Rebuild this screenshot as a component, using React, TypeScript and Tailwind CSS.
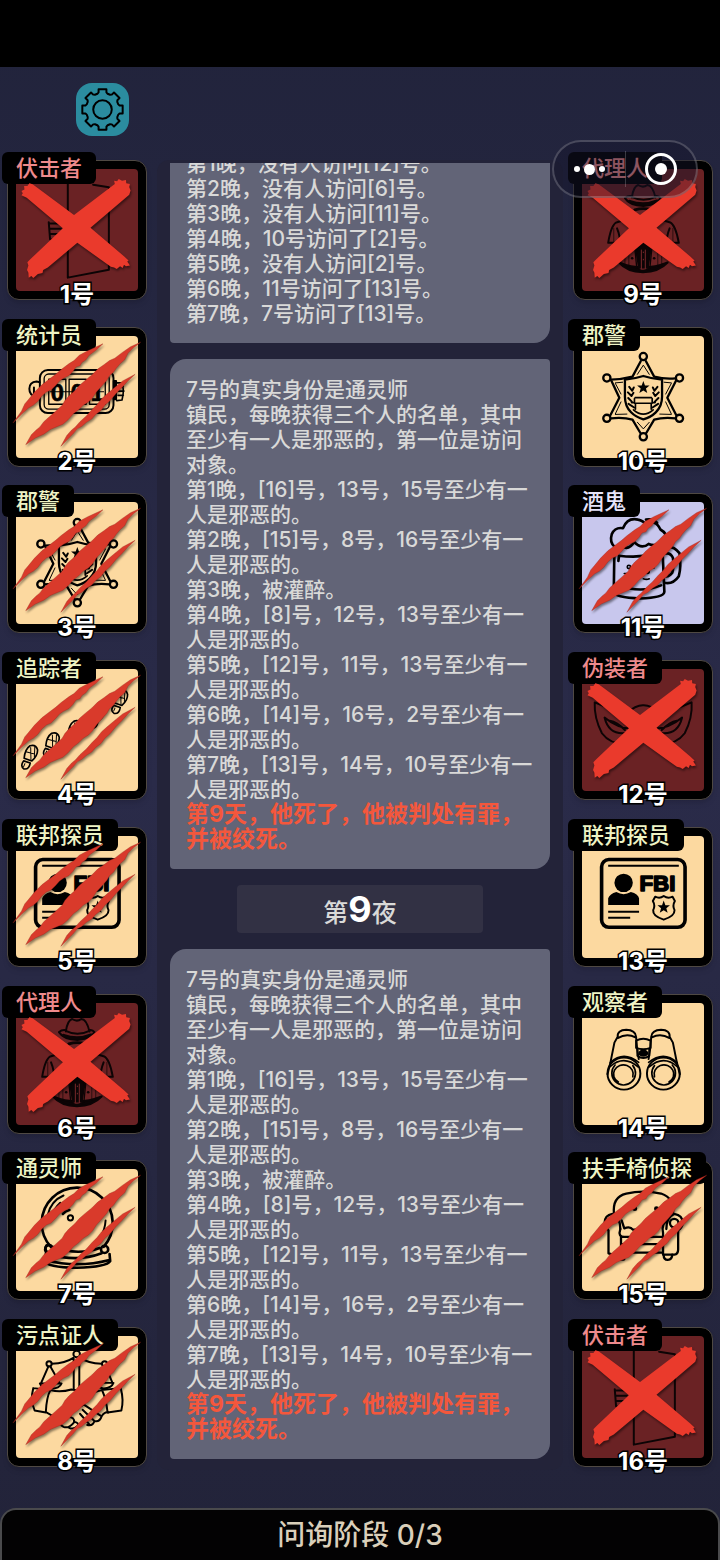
import type { ReactNode } from 'react'

type Mark = 'slash' | 'cross' | null
type Team = 'town' | 'neutral' | 'evil'
type RoleKey =
  | 'ambusher' | 'counter' | 'sheriff' | 'tracker' | 'fbi' | 'agent'
  | 'psychic' | 'witness' | 'drunk' | 'disguiser' | 'observer' | 'armchair'

interface Player {
  seat: number
  role: RoleKey
  mark: Mark
}

interface Role {
  name: string
  team: Team
  origin: string
  art: ReactNode
}

const STAR = 'M0-20 5-6 19-6 8 3 12 17 0 9-12 17-8 3-19-6-5-6Z'

const SheriffArt = (
  <g fill="none" stroke="#000" strokeWidth="7" strokeLinejoin="round" strokeLinecap="round">
    <path d="M422 692 397 739Q362 748 331 748L357 803 330 856M331 866 Q370 862 397 870L422 912M438 912 463 870Q490 862 528 866M530 856 503 803 529 752M528 744Q495 747 463 739L438 692" />
    {[[430, 678], [540, 743], [540, 866], [430, 922], [319, 866], [319, 743]].map(([cx, cy]) => (
      <circle key={`${cx}${cy}`} cx={cx} cy={cy} r="11" />
    ))}
    <path strokeWidth="3" d="M412 732 430 704 448 732M345 758 367 756M345 760 362 792M515 758 493 756M515 760 498 792M345 852 362 816M345 854 380 853M515 852 498 816M515 854 480 853M412 878 430 898 448 878" />
    <path d="M374 748Q402 746 430 737 458 746 487 748V800C487 842 455 862 430 869 405 862 374 842 374 800Z" />
    <path d={STAR} transform="translate(430 772)" fill="#000" stroke="none" />
    <path strokeWidth="5" d="M405 803H455M394 818H403V806M466 818H457V806M403 820H457M406 821V838M454 821V838M400 840Q430 866 460 840" />
    <path strokeWidth="6" d="M387 770 396 782M401 772 396 782M383 787 394 798M400 788 394 798M384 804 395 815M385 822 402 833M473 770 464 782M459 772 464 782M477 787 466 798M460 788 466 798M476 804 465 815M475 822 458 833" />
  </g>
)

const AgentArt = (
  <g fill="none" stroke="#0c0405" strokeWidth="6" strokeLinecap="round" strokeLinejoin="round">
    <path d="M197 152Q202 118 216 114 231 124 244 114 260 114 269 152" />
    <path d="M197 150Q232 168 269 150M176 154Q185 146 196 148M176 154Q190 176 232 178 275 174 284 154 278 146 269 148" />
    <path strokeWidth="10" d="M190 164Q232 180 274 163" />
    <path strokeWidth="9" d="M206 190Q232 182 258 190" />
    <path d="M125 290Q134 236 150 228L195 214M340 290Q330 236 314 228L270 214M125 290H150M340 290H315M152 246Q162 270 162 300M312 246Q302 270 302 300" />
    <path fill="#0c0405" d="M208 300 220 372Q231 378 244 372L256 300 232 280ZM158 350Q230 380 306 350 280 378 231 380 182 378 158 350Z" />
    <path stroke="#7a2a2c" strokeWidth="3" d="M226 312V368M238 312V368M232 318V320M232 340V342" />
    <path strokeWidth="2" d="M176 316V354M188 306V360M276 306V360M288 316V354M142 246V286M322 246V286" />
    <path strokeWidth="4" d="M206 306 212 366M258 306 252 366" />
    <circle cx="198" cy="337" r="4" fill="#0c0405" stroke="none" />
    <circle cx="265" cy="337" r="4" fill="#0c0405" stroke="none" />
  </g>
)

const FbiArt = (
  <g fill="none" stroke="#000" strokeLinecap="round" strokeLinejoin="round">
    <rect x="303" y="132" width="254" height="206" rx="22" strokeWidth="11" />
    <path strokeWidth="6" strokeLinecap="butt" d="M323 151H538M323 291H417M323 309H390" />
    <circle cx="370" cy="203" r="28" fill="#000" stroke="none" />
    <path fill="#000" stroke="none" d="M323 270V250Q328 236 348 231 370 244 392 231 414 236 417 250V270Z" />
    <text x="473" y="227" textAnchor="middle" fill="#000" strokeWidth="5" className="font-['Liberation_Sans_Narrow','Liberation_Sans',sans-serif] text-[68px] font-bold">FBI</text>
    <path strokeWidth="6" d="M466 245Q480 252 492 243 505 252 519 245L526 258Q518 272 525 286 526 304 492 315 458 304 460 286 467 272 459 258Z" />
    <path d={STAR} transform="translate(492 277)" fill="#000" stroke="none" />
  </g>
)

const DoorArt = (
  <g fill="none" stroke="#0c0405" strokeWidth="6" strokeLinecap="round" strokeLinejoin="round">
    <path d="M203 370V655L328 631V380L280 372M145 486 149 538M149 490H178M150 506H182M152 522H184M150 538 176 544" />
  </g>
)

const CounterArt = (
  <g fill="none" stroke="#000" strokeWidth="6" strokeLinejoin="round" strokeLinecap="round">
    <rect x="118" y="179" width="224" height="131" rx="24" />
    <rect x="131" y="191" width="198" height="107" rx="14" strokeWidth="4" />
    <rect x="145" y="207" width="52" height="76" strokeWidth="4" />
    <rect x="207" y="207" width="52" height="76" strokeWidth="4" />
    <rect x="269" y="207" width="48" height="76" strokeWidth="4" />
    <path strokeWidth="3" d="M150 245H312" />
    <path d="M118 216 108 214Q86 216 86 236T105 258L118 256M100 232V252" />
    <path fill="#000" d="M343 212H350V268H343Z" />
    <path strokeWidth="5" d="M352 218H368Q376 240 368 270L352 272M356 230H372M356 243H374M356 256H372" />
    {['0', '0', '1'].map((n, i) => (
      <text key={i} x={171 + i * 61} y="272" textAnchor="middle" fill="#000" strokeWidth="2" className="font-['Liberation_Sans',sans-serif] text-[72px] font-bold">{n}</text>
    ))}
  </g>
)

const TrackerArt = (
  <g fill="none" stroke="#000" strokeWidth="5" strokeLinecap="round" strokeLinejoin="round">
    {[[86, 337], [152, 299], [220, 262], [292, 212], [360, 168]].map(([x, y]) => (
      <g key={x} transform={`translate(${x} ${y}) rotate(24)`}>
        <path d="M-13 10Q-22-16-12-32 2-44 14-30 22-14 12 8ZM-11 18 10 16Q15 36 0 40-15 38-11 18Z" />
        <path strokeWidth="3" d="M-8-28 8 6M3-34 14-6M-16-10 8-14M-4 24V34" />
      </g>
    ))}
  </g>
)

const PsychicArt = (
  <g fill="none" stroke="#000" strokeWidth="8" strokeLinecap="round" strokeLinejoin="round">
    <path d="M152 803A108 108 0 1 1 312 802" />
    <path strokeWidth="6" d="M142 705Q152 662 190 646M153 712Q160 686 180 668M318 722Q316 752 302 772" />
    <path d="M188 702Q196 692 208 690" />
    <circle cx="211" cy="714" r="8" strokeWidth="6" />
    <path d="M160 803Q232 830 300 806M138 798Q128 812 142 824 232 850 306 822M136 824 133 846Q140 864 230 866 322 864 332 846L330 824M136 842Q230 868 330 842" />
    <circle cx="315" cy="810" r="11" />
    <circle cx="146" cy="808" r="11" />
  </g>
)

const WitnessArt = (
  <g fill="none" stroke="#000" strokeWidth="6" strokeLinecap="round" strokeLinejoin="round">
    <circle cx="230" cy="130" r="10" />
    <circle cx="146" cy="160" r="8" />
    <circle cx="315" cy="160" r="8" />
    <path d="M154 160Q196 158 220 142M306 160Q264 158 240 142M221 144V236M238 144V236M144 168 122 218M150 168 178 218M312 168 290 216M318 168 338 216M118 220H184Q178 236 150 236 122 234 118 220ZM284 218H342Q336 234 312 235 290 232 284 218Z" />
    <path d="M98 234 150 240M98 234Q88 270 102 302L136 308Q138 262 150 240 180 248 214 238L252 244Q282 250 306 240L364 234Q374 270 366 302L324 308Q320 268 308 242" />
    <path d="M138 308Q160 318 176 336 186 322 204 322 224 322 222 338 206 358 190 352 176 344 182 332M222 336Q240 340 232 350 220 362 206 354M214 272Q230 302 252 284M252 284 306 320Q314 306 326 308M248 300 284 334M240 312 270 346M306 320Q300 338 284 334 280 350 262 346" />
  </g>
)

const DrunkArt = (
  <g fill="none" stroke="#000" strokeWidth="8" strokeLinecap="round" strokeLinejoin="round">
    <path d="M344 204Q326 190 334 164 344 142 368 146 382 112 414 120 432 124 438 136 466 116 482 150 504 162 500 184" />
    <path d="M344 204Q352 214 364 202 388 214 402 188 424 212 446 194 470 204 500 184M438 120Q460 116 472 130" />
    <path d="M342 206 340 342Q344 356 420 360 492 358 494 340L488 204M354 246 356 230Q420 238 486 222M352 318Q420 346 484 320" />
    <path d="M492 204Q520 196 540 222 546 262 538 292 520 318 494 312M494 224Q512 218 520 236 524 262 518 282 508 296 494 292" />
    <circle cx="442" cy="278" r="6" strokeWidth="5" />
    <circle cx="386" cy="264" r="5" strokeWidth="5" />
    <path strokeWidth="5" d="M372 284H380M430 300Q440 304 448 300M462 250V268" />
  </g>
)

const DisguiserArt = (
  <g fill="none" stroke="#0c0405" strokeWidth="6" strokeLinecap="round" strokeLinejoin="round">
    <path d="M282 668Q330 690 378 702 408 676 430 677 452 676 482 702 530 690 577 668 580 716 556 762 528 800 470 794 446 784 430 764 414 784 390 794 332 800 304 762 280 716 282 668Z" />
    <path d="M312 714Q324 764 370 762 394 758 398 748 352 748 312 714ZM328 724Q350 728 374 752M548 714Q536 764 490 762 466 758 462 748 508 748 548 714ZM532 724Q510 728 486 752" />
  </g>
)

// one barrel of the binoculars, the other is its mirror image
const Barrel = (
  <g>
    <path d="M352 664Q350 644 378 643 406 644 408 664L409 676Q410 700 416 732M352 664 342 682 330 742 321 778M352 668Q380 652 406 666" />
    <ellipse cx="371" cy="776" rx="50" ry="49" />
    <path strokeWidth="5" d="M330 742Q370 706 416 742M328 756Q370 718 414 756" />
    <path strokeWidth="5" d="M354 802A30 28 0 1 1 398 786M344 750A36 36 0 1 0 398 752" />
  </g>
)

const ObserverArt = (
  <g fill="none" stroke="#000" strokeWidth="6" strokeLinecap="round" strokeLinejoin="round">
    {Barrel}
    <g transform="translate(862 0) scale(-1 1)">{Barrel}</g>
    <path d="M408 676Q430 664 452 676V698Q430 706 408 698ZM412 702V722Q430 736 448 722V702" />
    <ellipse cx="430" cy="714" rx="12" ry="8" fill="#000" />
  </g>
)

const ArmchairArt = (
  <g fill="none" stroke="#000" strokeWidth="7" strokeLinecap="round" strokeLinejoin="round">
    <path d="M341 194Q334 140 378 130 430 118 484 130 526 144 520 192" />
    <path d="M360 238Q360 202 336 192 312 196 312 220 314 234 324 242V312L338 316H352L358 330H370M500 238Q500 202 524 192 550 196 550 220 548 234 536 242V300Q536 314 524 316H490V250Q484 218 506 210" />
    <path d="M364 212 372 236Q390 228 398 240H470M360 238Q352 262 372 262H486M362 262V306M362 284H488M362 310H488M372 330H352M492 318Q492 332 504 332 518 330 518 316" />
    <circle cx="524" cy="220" r="13" />
    <circle cx="404" cy="176" r="4" fill="#000" />
    <circle cx="470" cy="176" r="4" fill="#000" />
  </g>
)

// every drawing keeps its own 420x420 window
const ROLES: Record<RoleKey, Role> = {
  ambusher: { name: '伏击者', team: 'evil', origin: '21 300 420 420', art: DoorArt },
  counter: { name: '统计员', team: 'town', origin: '21 51 420 420', art: CounterArt },
  sheriff: { name: '郡警', team: 'town', origin: '219 591 420 420', art: SheriffArt },
  tracker: { name: '追踪者', team: 'town', origin: '21 45 420 420', art: TrackerArt },
  fbi: { name: '联邦探员', team: 'town', origin: '219 36 420 420', art: FbiArt },
  agent: { name: '代理人', team: 'evil', origin: '21 41 420 420', art: AgentArt },
  psychic: { name: '通灵师', team: 'town', origin: '21 541 420 420', art: PsychicArt },
  witness: { name: '污点证人', team: 'town', origin: '21 51 420 420', art: WitnessArt },
  drunk: { name: '酒鬼', team: 'neutral', origin: '219 42 420 420', art: DrunkArt },
  disguiser: { name: '伪装者', team: 'evil', origin: '219 542 420 420', art: DisguiserArt },
  observer: { name: '观察者', team: 'town', origin: '219 537 420 420', art: ObserverArt },
  armchair: { name: '扶手椅侦探', team: 'town', origin: '219 31 420 420', art: ArmchairArt },
}

const TEAM_BG: Record<Team, string> = {
  town: 'bg-[#fcd9a0]',
  neutral: 'bg-[#c8c7ed]',
  evil: 'bg-[#6a2224]',
}

const TEAM_TEXT: Record<Team, string> = {
  town: 'text-[#eef3c4]',
  neutral: 'text-[#e6e4fa]',
  evil: 'text-[#ee8a8c]',
}

const LEFT: Player[] = [
  { seat: 1, role: 'ambusher', mark: 'cross' },
  { seat: 2, role: 'counter', mark: 'slash' },
  { seat: 3, role: 'sheriff', mark: 'slash' },
  { seat: 4, role: 'tracker', mark: 'slash' },
  { seat: 5, role: 'fbi', mark: 'slash' },
  { seat: 6, role: 'agent', mark: 'cross' },
  { seat: 7, role: 'psychic', mark: 'slash' },
  { seat: 8, role: 'witness', mark: 'slash' },
]

const RIGHT: Player[] = [
  { seat: 9, role: 'agent', mark: 'cross' },
  { seat: 10, role: 'sheriff', mark: null },
  { seat: 11, role: 'drunk', mark: 'slash' },
  { seat: 12, role: 'disguiser', mark: 'cross' },
  { seat: 13, role: 'fbi', mark: null },
  { seat: 14, role: 'observer', mark: null },
  { seat: 15, role: 'armchair', mark: 'slash' },
  { seat: 16, role: 'ambusher', mark: 'cross' },
]

const VISITS = [
  '第1晚，没有人访问[12]号。',
  '第2晚，没有人访问[6]号。',
  '第3晚，没有人访问[11]号。',
  '第4晚，10号访问了[2]号。',
  '第5晚，没有人访问[2]号。',
  '第6晚，11号访问了[13]号。',
  '第7晚，7号访问了[13]号。',
]

const PSYCHIC_LOG = [
  '7号的真实身份是通灵师',
  '镇民，每晚获得三个人的名单，其中至少有一人是邪恶的，第一位是访问对象。',
  '第1晚，[16]号，13号，15号至少有一人是邪恶的。',
  '第2晚，[15]号，8号，16号至少有一人是邪恶的。',
  '第3晚，被灌醉。',
  '第4晚，[8]号，12号，13号至少有一人是邪恶的。',
  '第5晚，[12]号，11号，13号至少有一人是邪恶的。',
  '第6晚，[14]号，16号，2号至少有一人是邪恶的。',
  '第7晚，[13]号，14号，10号至少有一人是邪恶的。',
]

const VERDICT = '第9天，他死了，他被判处有罪，并被绞死。'

function SlashMark() {
  return (
    <svg viewBox="21 51 420 420" className="absolute inset-0 h-full w-full overflow-visible drop-shadow-[1px_2px_1px_rgba(0,0,0,0.45)]" aria-hidden="true">
      <g fill="#d93a2b" stroke="#8f2018" strokeWidth="1">
        <path d="M36 340 62 304 72 282 84 268 102 246 124 224 142 210 166 192 182 178 206 160 222 150 238 134 264 120 310 99 290 118 268 134 258 148 246 156 240 166 228 170 218 184 206 196 190 204 178 212 166 226 152 240 138 246 124 258 112 274 98 286 84 294 66 310Z" />
        <path d="M75 406 92 376 106 362 118 352 130 336 146 322 166 304 186 286 194 272 206 258 224 242 238 226 254 212 276 194 294 176 314 162 330 150 346 143 368 126 394 108 425 94 402 112 386 128 376 148 362 160 350 174 342 186 330 196 322 210 306 228 290 246 278 264 266 276 250 286 236 300 220 312 204 330 188 344 168 352 150 360 130 374 104 386Z" />
        <path d="M182 411 200 378 214 362 226 352 240 336 260 318 276 300 292 284 306 266 322 252 342 235 370 212 408 192 386 212 368 232 350 250 332 272 316 286 304 302 288 314 276 328 260 338 246 350 232 358 220 372 204 388Z" />
      </g>
    </svg>
  )
}

function CrossMark() {
  return (
    <svg viewBox="21 300 420 420" className="absolute inset-0 h-full w-full overflow-visible drop-shadow-[1px_2px_1px_rgba(0,0,0,0.45)]" aria-hidden="true">
      <path
        fill="#ea3a2c"
        d="M62 404 66 398 62 391 71 387 70 376 80 376 86 368 96 371 222 464 346 370 344 360 353 362 358 355 368 360 380 358 381 368 392 370 390 379 394 390 390 403 272 503 374 590 388 603 384 606 392 618 380 620 374 616 370 626 362 620 352 629 344 624 334 622 232 549 142 624 128 632 126 641 112 644 98 656 92 650 84 655 83 640 79 632 83 618 80 608 88 600 188 505 78 412Z"
      />
    </svg>
  )
}

function PlayerCard({ player }: { player: Player }) {
  const role = ROLES[player.role]
  return (
    <li>
      <button type="button" className="relative block size-[140px] rounded-xl border border-[#4f4943] bg-black p-2 shadow-md">
        <span className={`block size-full rounded-sm ${TEAM_BG[role.team]}`} />
        <svg viewBox={role.origin} className="absolute inset-0 h-full w-full" aria-hidden="true">
          {role.art}
        </svg>
        <span className={`absolute -top-[9px] -left-1.5 h-8 rounded-md bg-black px-3.5 text-[22px] leading-8 font-medium whitespace-nowrap ${TEAM_TEXT[role.team]}`}>
          {role.name}
        </span>
        {player.mark === 'slash' && <SlashMark />}
        {player.mark === 'cross' && <CrossMark />}
        <span className="absolute inset-x-0 -bottom-2 text-center text-2xl leading-6 font-bold text-white [-webkit-text-stroke:3px_#000] [paint-order:stroke_fill]">
          {player.seat}号
        </span>
      </button>
    </li>
  )
}

function PlayerColumn({ players }: { players: Player[] }) {
  return (
    <ul className="flex w-[140px] shrink-0 flex-col justify-between pb-[3px]">
      {players.map((p) => (
        <PlayerCard key={p.seat} player={p} />
      ))}
    </ul>
  )
}

function LogCard({ lines, verdict }: { lines: string[]; verdict?: string }) {
  return (
    <article className="shrink-0 rounded-sm rounded-tl-2xl rounded-br-2xl bg-[#626477] pt-[18px] pr-3 pb-[17px] pl-4 text-[21px] leading-[25px] font-medium text-[#d9d9d8]">
      {lines.map((line) => (
        <p key={line}>{line}</p>
      ))}
      {verdict && <p className="text-[23px] leading-[25px] font-bold text-[#f4573c]">{verdict}</p>}
    </article>
  )
}

function GearIcon() {
  const pts: string[] = []
  for (let i = 0; i < 8; i++) {
    for (const [deg, r] of [[-18, 50], [-13, 53], [-11, 62], [11, 62], [13, 53], [18, 50]]) {
      const a = ((i * 45 + deg) * Math.PI) / 180
      pts.push(`${(80 + r * Math.sin(a)).toFixed(1)},${(80 - r * Math.cos(a)).toFixed(1)}`)
    }
  }
  return (
    <svg viewBox="0 0 160 160" className="size-full" fill="none" stroke="#000" strokeWidth="6" strokeLinejoin="round" aria-hidden="true">
      <polygon points={pts.join(' ')} />
      <circle cx="80" cy="80" r="28" />
    </svg>
  )
}

function Capsule() {
  return (
    <div className="absolute top-[140px] right-[22px] z-10 flex h-[58px] w-[146px] items-center rounded-full border-2 border-white/20 bg-[#14142a]/45">
      <button type="button" aria-label="更多" className="flex flex-1 items-center justify-center gap-1">
        <span className="size-1.5 rounded-full bg-white" />
        <span className="size-[11px] rounded-full bg-white" />
        <span className="size-1.5 rounded-full bg-white" />
      </button>
      <span className="h-9 w-px bg-white/20" />
      <button type="button" aria-label="关闭" className="flex flex-1 items-center justify-center">
        <span className="flex size-8 items-center justify-center rounded-full border-[3px] border-white">
          <span className="size-3 rounded-full bg-white" />
        </span>
      </button>
    </div>
  )
}

export default function App() {
  return (
    <div className="relative flex h-screen flex-col overflow-hidden bg-linear-to-b from-[#21233b] via-[#2a2b49] to-[#222339] font-['Inter','Noto_Sans_CJK_SC',sans-serif]">
      <div className="h-[67px] shrink-0 bg-black" />
      <header className="shrink-0 py-4 pl-[76px]">
        <button type="button" aria-label="设置" className="block size-[53px] rounded-2xl bg-[#2b8c9f]">
          <GearIcon />
        </button>
      </header>
      <Capsule />

      <main className="flex min-h-0 flex-1 gap-2.5 px-[7px] pt-2 pb-[38px]">
        <PlayerColumn players={LEFT} />
        <section className="flex min-w-0 flex-1 rounded-xl bg-[#232339] px-[13px] pt-[3px] pb-[11px]">
          <div className="flex min-w-0 flex-1 flex-col justify-end gap-4 overflow-hidden">
            <LogCard lines={VISITS} />
            <LogCard lines={PSYCHIC_LOG} verdict={VERDICT} />
            <h2 className="mx-auto flex h-12 w-[246px] shrink-0 items-baseline justify-center rounded-sm bg-[#323144] text-[25px] leading-[48px] font-medium text-[#d9d9d8]">
              第<strong className="text-[36px] leading-[48px] text-white">9</strong>夜
            </h2>
            <LogCard lines={PSYCHIC_LOG} verdict={VERDICT} />
          </div>
        </section>
        <PlayerColumn players={RIGHT} />
      </main>

      <button type="button" className="h-[52px] shrink-0 rounded-t-2xl border-2 border-b-0 border-[#4a4a4c] bg-[#030203] text-[28px] leading-[48px] font-medium text-[#dacfba]">
        问询阶段 0/3
      </button>
    </div>
  )
}
